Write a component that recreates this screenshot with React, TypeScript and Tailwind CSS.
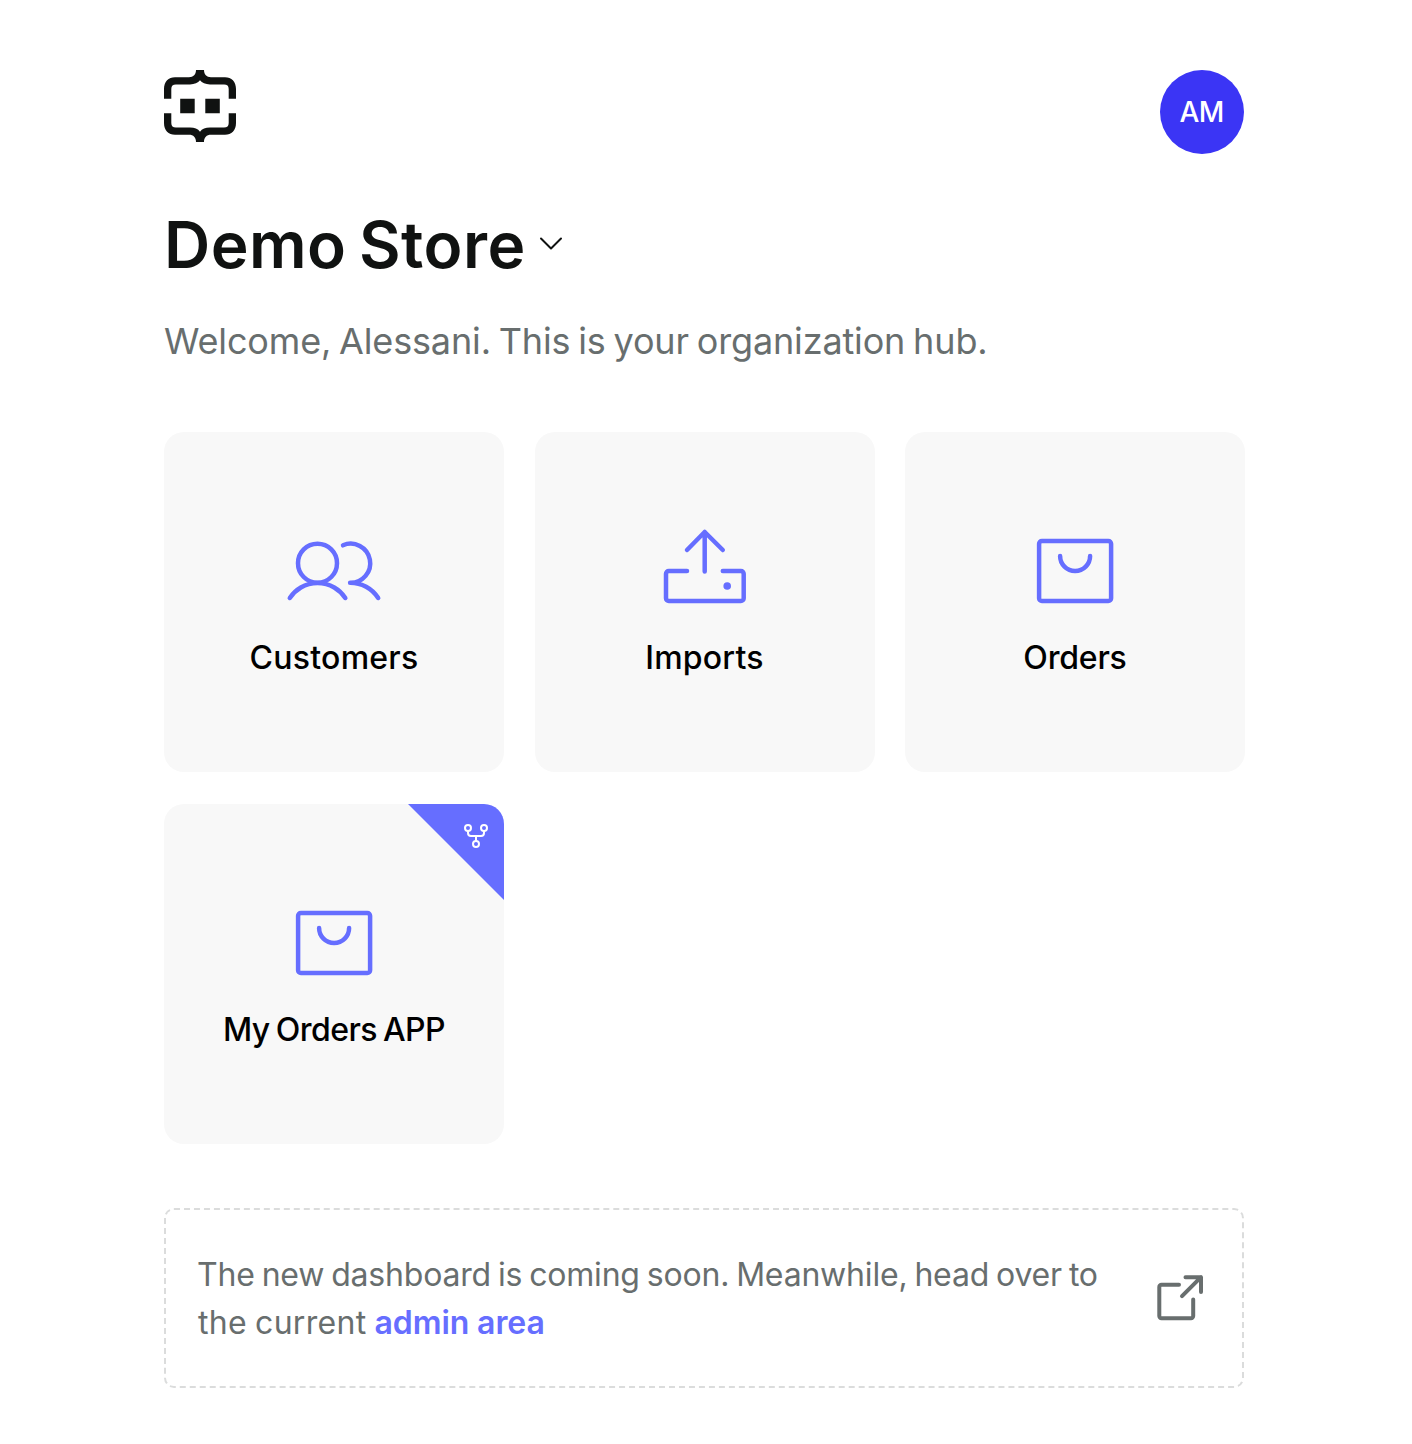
import type { ReactNode } from "react";

function Logo() {
  return (
    <svg width="72" height="72" viewBox="0 0 72 72" fill="#101211">
      <path
        id="half"
        d="M0 28.7V19C0 11.5 4.5 7.2 11 7.2H25C29.5 7.2 32 4.5 32 0H40C40 4.5 42.5 7.2 47 7.2H61C67.5 7.2 72 11.5 72 19V28.7H64.7V19C64.7 15.8 63.2 14.4 60 14.4H46C41.5 14.4 38 13 36 10.3C34 13 30.5 14.4 26 14.4H12C8.8 14.4 7.3 15.8 7.3 19V28.7Z"
      />
      <use href="#half" transform="matrix(1 0 0 -1 0 72)" />
      <path d="M16.2 28.8H30.7V43.2H16.2ZM41.3 28.8H55.8V43.2H41.3Z" />
    </svg>
  );
}

function CardIcon({ children }: { children: ReactNode }) {
  return (
    <svg
      width="96"
      height="96"
      viewBox="0 0 96 96"
      fill="none"
      stroke="#666eff"
      strokeWidth="4.5"
      strokeLinecap="round"
      strokeLinejoin="round"
    >
      {children}
    </svg>
  );
}

function CustomersIcon() {
  return (
    <CardIcon>
      <circle cx="31.5" cy="40.2" r="19.5" />
      <path d="M3.8 75A33.2 33.2 0 0 1 59.3 75" />
      <path d="M57 22.3A19.5 19.5 0 1 1 64.1 59.7A33.2 33.2 0 0 1 92.2 75" />
    </CardIcon>
  );
}

function ImportsIcon() {
  return (
    <CardIcon>
      <path d="M30 48H11.8a2.8 2.8 0 0 0-2.8 2.8V75.2a2.8 2.8 0 0 0 2.8 2.8H83.9a2.8 2.8 0 0 0 2.8-2.8V50.8a2.8 2.8 0 0 0-2.8-2.8H65.8" />
      <path d="M47.7 48.5V9M30 27L47.7 9L65.8 27" />
      <circle cx="70.2" cy="63" r="3.8" fill="#666eff" stroke="none" />
    </CardIcon>
  );
}

function OrdersIcon() {
  return (
    <CardIcon>
      <rect x="12.1" y="18" width="72" height="60" rx="2.8" />
      <path d="M33.1 33a15 15 0 0 0 30 0" />
    </CardIcon>
  );
}

function Card({ icon, label, children }: { icon: ReactNode; label: ReactNode; children?: ReactNode }) {
  return (
    <a className="relative flex h-[340px] w-[340px] flex-col items-center overflow-hidden rounded-[20px] bg-[#f8f8f8] pt-[91px]">
      {icon}
      <span className="mt-[15px] text-[32px] leading-[48px] font-medium whitespace-nowrap text-black">{label}</span>
      {children}
    </a>
  );
}

function ForkBadge() {
  return (
    <svg className="absolute top-0 right-0" width="96" height="96" viewBox="0 0 96 96" fill="none">
      <path d="M0 0H96V96Z" fill="#666eff" />
      <g stroke="#fff" strokeWidth="2">
        <circle cx="60" cy="24" r="3" />
        <circle cx="76" cy="24" r="3" />
        <circle cx="68" cy="40" r="3" />
        <path d="M60 27v2a3 3 0 0 0 3 3h10a3 3 0 0 0 3-3v-2M68 32v5" />
      </g>
    </svg>
  );
}

export default function App() {
  return (
    <div className="min-h-[1444px] bg-white pt-[70px] pl-[164px] font-['Inter',sans-serif]">
      <div className="w-[1080px]">
        <header className="flex h-[84px] items-start justify-between">
          <Logo />
          <div className="flex h-[84px] w-[84px] items-center justify-center rounded-full bg-[#3b35f5] text-[28px] font-medium text-white">
            <span className="pr-px tracking-[-0.6px]">AM</span>
          </div>
        </header>

        <div className="mt-[50px] flex h-[80px] items-center">
          <h1 className="pt-0.5 text-[64px] leading-[80px] font-semibold tracking-[0.45px] [word-spacing:-4px] whitespace-nowrap text-[#101211]">
            Demo Store
          </h1>
          <svg className="ml-3" width="26" height="16" viewBox="0 0 26 16" fill="none" stroke="#101211" strokeWidth="2" strokeLinecap="round" strokeLinejoin="round">
            <path d="M3 2.5L13 12.5L23 2.5" />
          </svg>
        </div>

        <p className="mt-[29px] mb-[63px] text-[36px] leading-[56px] tracking-[-0.15px] [word-spacing:-2.1px] whitespace-nowrap text-[#686e6e]">
          Welcome, Alessani. This is your organization hub.
        </p>

        <div className="grid w-[1081px] grid-cols-[340px_340px_340px] justify-between gap-y-8">
          <Card icon={<CustomersIcon />} label={<span className="tracking-[0.25px]">Customers</span>} />
          <Card icon={<ImportsIcon />} label={<span className="tracking-[0.2px]">Imports</span>} />
          <Card icon={<OrdersIcon />} label={<span className="tracking-[-0.2px]">Orders</span>} />
          <Card icon={<OrdersIcon />} label={<span className="tracking-[-0.55px] [word-spacing:-2px]">My Orders APP</span>}>
            <ForkBadge />
          </Card>
        </div>

        <div className="mt-16 flex h-[180px] items-center justify-between rounded-[10px] border-2 border-dashed border-[#dbdcdc] pr-[36px] pl-8">
          <p className="pt-0.5 text-[32px] leading-[48px] whitespace-nowrap text-[#686e6e]">
            <span className="-ml-px tracking-[-0.2px] [word-spacing:-1.8px]">
              The new dashboard is coming soon. Meanwhile, head over to
            </span>
            <br />
            <span className="tracking-[0.3px] [word-spacing:-1.2px]">the current </span>
            <a className="font-semibold tracking-[-0.1px] text-[#666eff]">admin area</a>
          </p>
          <svg width="52" height="52" viewBox="1154 1272 52 52" fill="none" stroke="#686e6e" strokeWidth="4" strokeLinecap="round" strokeLinejoin="round">
            <path d="M1179 1284.7H1161.5a2.2 2.2 0 0 0-2.2 2.2V1316.1a2.2 2.2 0 0 0 2.2 2.2H1191a2.2 2.2 0 0 0 2.2-2.2V1299.5" />
            <path d="M1182 1296.2L1201 1277.2M1185.5 1277.2H1201V1292" />
          </svg>
        </div>
      </div>
    </div>
  );
}
